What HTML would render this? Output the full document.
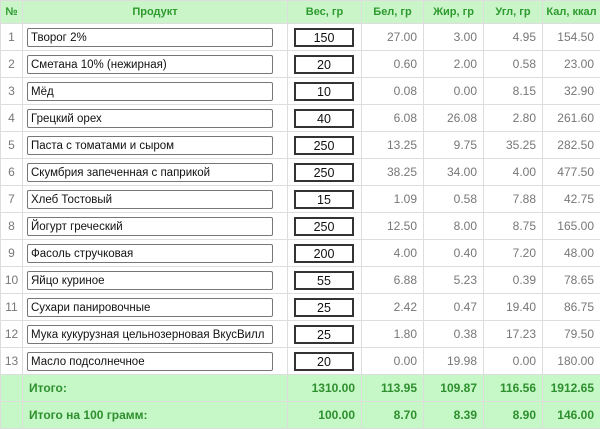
<!DOCTYPE html>
<html><head><meta charset="utf-8"><style>
body{margin:0;width:600px;height:429px;overflow:hidden;background:#fff;font-family:"Liberation Sans","DejaVu Sans",sans-serif;}
table{border-collapse:collapse;table-layout:fixed;width:600px;}
td,th{border:1px solid #ddd;padding:0;font-size:12px;}
th{background:#c9f5c9;color:#2f9a2f;font-weight:bold;height:22px;text-align:center;font-size:11px;}
tr.r td{height:26px;color:#777;}
td.n{text-align:center;color:#888;}
td.v{text-align:right;padding-right:6px;}
.p{box-sizing:border-box;width:246px;height:19px;border:1px solid #777;border-radius:2px;margin-left:4px;padding:1px 0 0 3px;color:#111;font-size:11.5px;display:flex;align-items:center;white-space:nowrap;overflow:hidden;}
.w{box-sizing:border-box;width:60px;height:19px;border:2px solid #333;margin-left:6px;color:#111;font-size:12.5px;display:flex;align-items:center;justify-content:center;padding-top:1px;}
tr.t td{background:#c6f7c6;color:#2e8f2e;font-weight:bold;height:26px;font-size:12px;}
</style></head><body>
<table>
<colgroup><col style="width:22px"><col style="width:265px"><col style="width:74px"><col style="width:62px"><col style="width:60px"><col style="width:59px"><col style="width:58px"></colgroup>
<tr><th>№</th><th>Продукт</th><th>Вес, гр</th><th>Бел, гр</th><th>Жир, гр</th><th>Угл, гр</th><th>Кал, ккал</th></tr>
<tr class="r"><td class="n">1</td><td><div class="p">Творог 2%</div></td><td><div class="w">150</div></td><td class="v">27.00</td><td class="v">3.00</td><td class="v">4.95</td><td class="v">154.50</td></tr>
<tr class="r"><td class="n">2</td><td><div class="p">Сметана 10% (нежирная)</div></td><td><div class="w">20</div></td><td class="v">0.60</td><td class="v">2.00</td><td class="v">0.58</td><td class="v">23.00</td></tr>
<tr class="r"><td class="n">3</td><td><div class="p">Мёд</div></td><td><div class="w">10</div></td><td class="v">0.08</td><td class="v">0.00</td><td class="v">8.15</td><td class="v">32.90</td></tr>
<tr class="r"><td class="n">4</td><td><div class="p">Грецкий орех</div></td><td><div class="w">40</div></td><td class="v">6.08</td><td class="v">26.08</td><td class="v">2.80</td><td class="v">261.60</td></tr>
<tr class="r"><td class="n">5</td><td><div class="p">Паста с томатами и сыром</div></td><td><div class="w">250</div></td><td class="v">13.25</td><td class="v">9.75</td><td class="v">35.25</td><td class="v">282.50</td></tr>
<tr class="r"><td class="n">6</td><td><div class="p">Скумбрия запеченная с паприкой</div></td><td><div class="w">250</div></td><td class="v">38.25</td><td class="v">34.00</td><td class="v">4.00</td><td class="v">477.50</td></tr>
<tr class="r"><td class="n">7</td><td><div class="p">Хлеб Тостовый</div></td><td><div class="w">15</div></td><td class="v">1.09</td><td class="v">0.58</td><td class="v">7.88</td><td class="v">42.75</td></tr>
<tr class="r"><td class="n">8</td><td><div class="p">Йогурт греческий</div></td><td><div class="w">250</div></td><td class="v">12.50</td><td class="v">8.00</td><td class="v">8.75</td><td class="v">165.00</td></tr>
<tr class="r"><td class="n">9</td><td><div class="p">Фасоль стручковая</div></td><td><div class="w">200</div></td><td class="v">4.00</td><td class="v">0.40</td><td class="v">7.20</td><td class="v">48.00</td></tr>
<tr class="r"><td class="n">10</td><td><div class="p">Яйцо куриное</div></td><td><div class="w">55</div></td><td class="v">6.88</td><td class="v">5.23</td><td class="v">0.39</td><td class="v">78.65</td></tr>
<tr class="r"><td class="n">11</td><td><div class="p">Сухари панировочные</div></td><td><div class="w">25</div></td><td class="v">2.42</td><td class="v">0.47</td><td class="v">19.40</td><td class="v">86.75</td></tr>
<tr class="r"><td class="n">12</td><td><div class="p">Мука кукурузная цельнозерновая ВкусВилл</div></td><td><div class="w">25</div></td><td class="v">1.80</td><td class="v">0.38</td><td class="v">17.23</td><td class="v">79.50</td></tr>
<tr class="r"><td class="n">13</td><td><div class="p">Масло подсолнечное</div></td><td><div class="w">20</div></td><td class="v">0.00</td><td class="v">19.98</td><td class="v">0.00</td><td class="v">180.00</td></tr>
<tr class="t"><td></td><td style="padding-left:6px">Итого:</td><td class="v">1310.00</td><td class="v">113.95</td><td class="v">109.87</td><td class="v">116.56</td><td class="v">1912.65</td></tr>
<tr class="t"><td></td><td style="padding-left:6px">Итого на 100 грамм:</td><td class="v">100.00</td><td class="v">8.70</td><td class="v">8.39</td><td class="v">8.90</td><td class="v">146.00</td></tr>
</table>
</body></html>
